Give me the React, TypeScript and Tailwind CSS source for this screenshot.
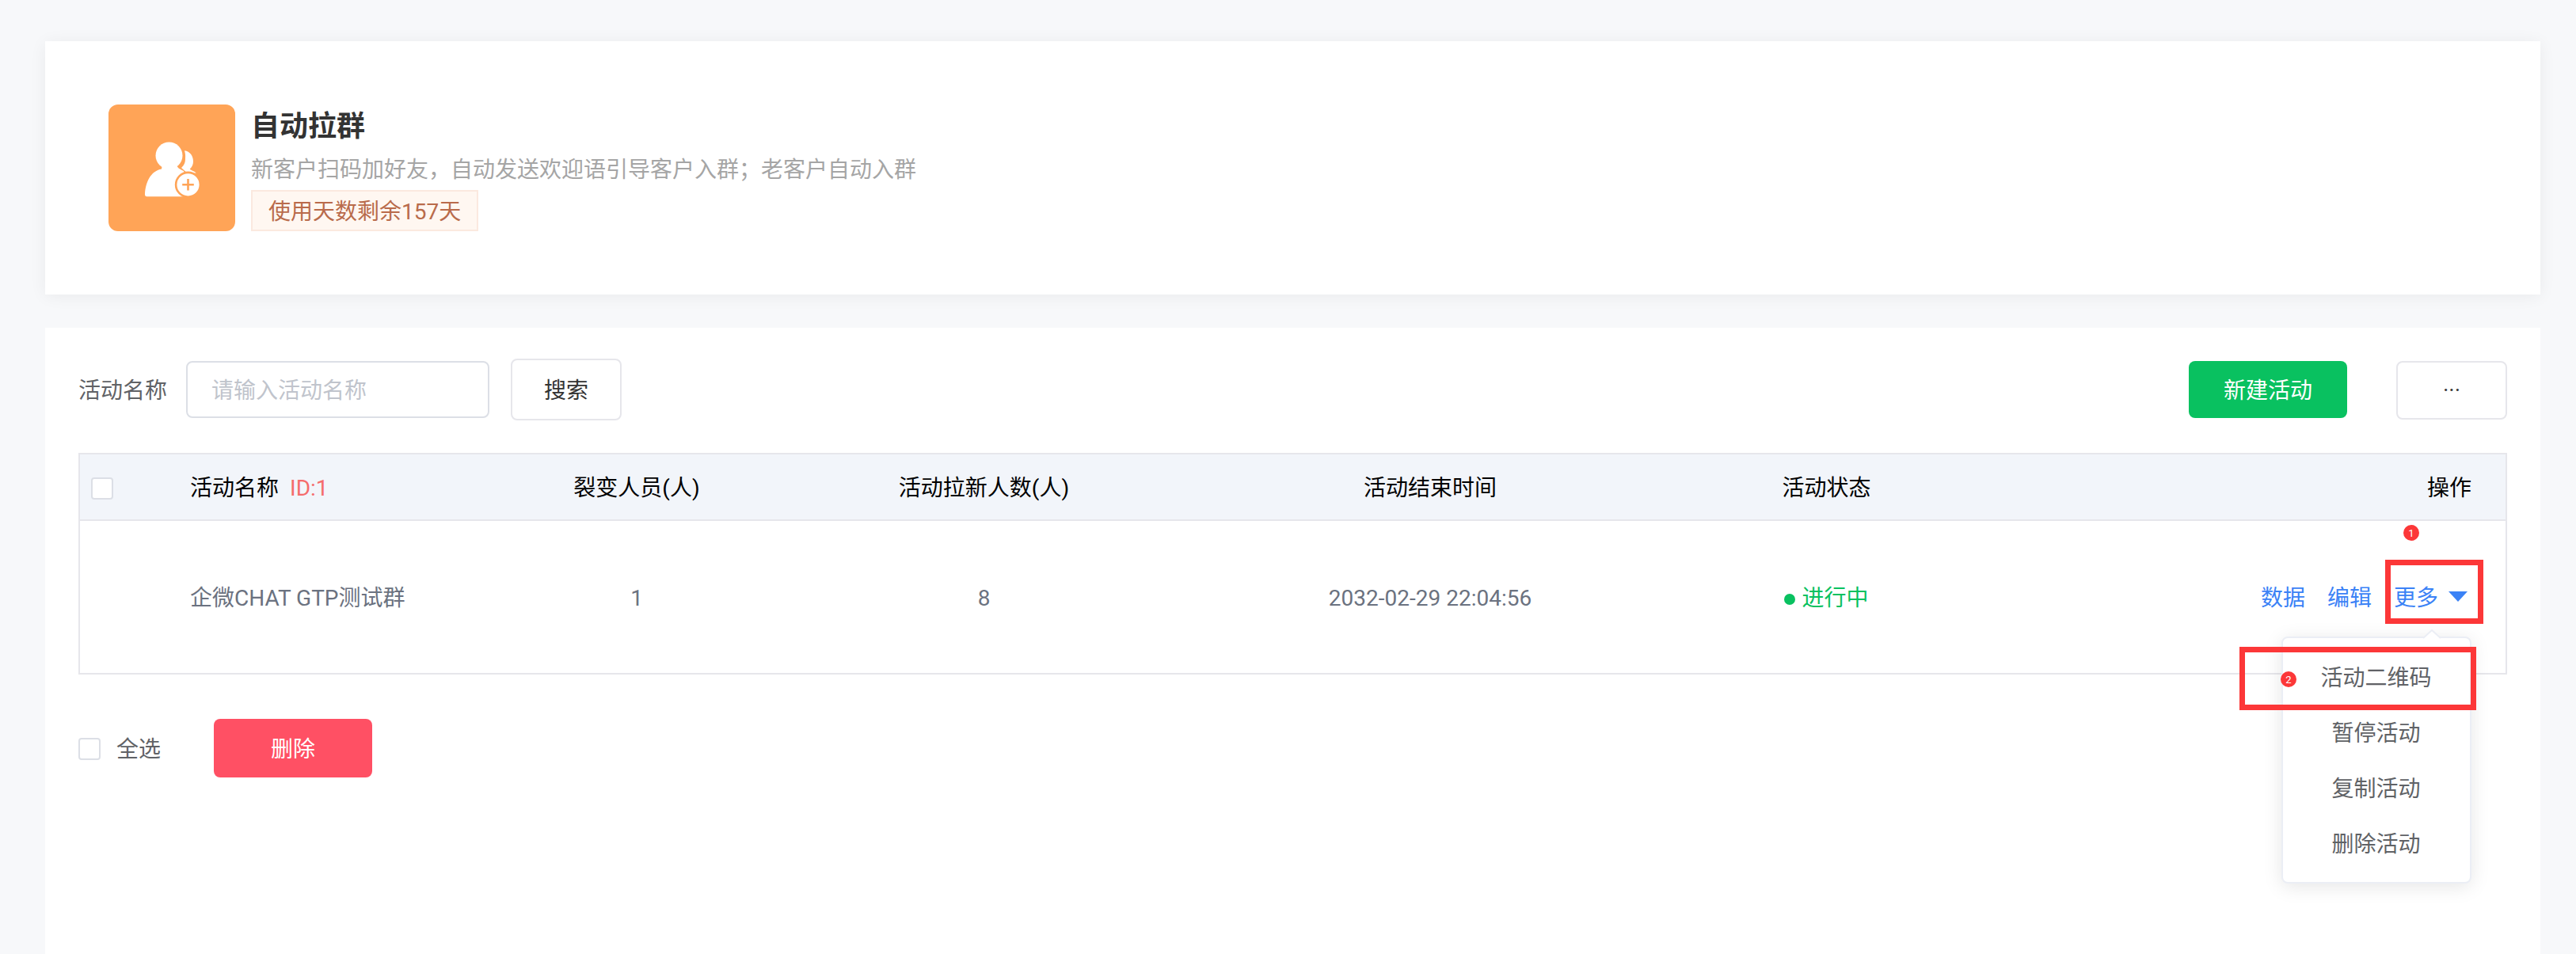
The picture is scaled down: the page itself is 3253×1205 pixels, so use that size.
import clsx from "clsx";

type Activity = {
  name: string;
  members: number;
  newMembers: number;
  endTime: string;
  status: string;
};

const activities: Activity[] = [
  {
    name: "企微CHAT GTP测试群",
    members: 1,
    newMembers: 8,
    endTime: "2032-02-29 22:04:56",
    status: "进行中",
  },
];

const menuItems = ["活动二维码", "暂停活动", "复制活动", "删除活动"];

const columns = "grid grid-cols-[118px_366px_438px_439px_688px_313px_1fr] items-center pt-1";

function Checkbox({ className }: { className?: string }) {
  return <span className={clsx("block size-7 shrink-0 rounded-sm border-2 border-[#dcdfe6] bg-white", className)} />;
}

function GroupIcon() {
  return (
    <svg viewBox="0 0 160 160" className="size-40 shrink-0">
      <rect width="160" height="160" rx="12" fill="#ffa457" />
      <path
        fill="#fff"
        d="M96 58.300c7 1 11 6.500 11 13.700 0 4-1.500 7-4.300 9.500 2 2 5 2 8 5L100 87l-8-7c4-4 5-7 5-12 .3-4 0-6-1-9.700z"
      />
      <circle cx="76.500" cy="64.500" r="17" fill="#fff" />
      <path
        fill="#fff"
        d="M68 76h18c1 4 3 5 9 8l5 17-6 15.300H48.500c-1.700 0-2.500-1-2.500-2.800C46.500 99 53 84 67 81.500z"
      />
      <circle cx="100.500" cy="101.300" r="15.400" fill="#fff" stroke="#ffa457" strokeWidth="2.600" />
      <path d="M100.500 94v14.600M93.200 101.300h14.600" stroke="#ffa457" strokeWidth="2.600" />
    </svg>
  );
}

function Header() {
  return (
    <section className="flex h-80 items-center bg-white px-20 shadow-[0_2px_20px_rgba(0,0,0,0.06)]">
      <GroupIcon />
      <div className="ml-5 flex h-40 flex-col items-start">
        <h1 className="h-[54px] text-4xl leading-[56px] font-bold text-[#333]">自动拉群</h1>
        <p className="h-[54px] leading-[58px] text-[#a5a5a5]">
          新客户扫码加好友，自动发送欢迎语引导客户入群；老客户自动入群
        </p>
        <span className="h-[52px] border-2 border-[#fbe9df] bg-[#fff7f1] px-5 leading-[51px] text-[#b96b4b]">
          使用天数剩余157天
        </span>
      </div>
    </section>
  );
}

function Toolbar() {
  return (
    <div className="flex h-[78px] items-center">
      <label className="pt-[3px] text-[#606266]">活动名称</label>
      <input
        placeholder="请输入活动名称"
        className="ml-6 h-[72px] w-[383px] rounded-lg border-2 border-[#dcdfe6] px-[30px] pt-[3px] placeholder:text-[#c0c4cc]"
      />
      <button className="ml-[27px] h-[78px] w-[140px] rounded-lg border-2 border-[#e6e6eb] pt-[3px] text-[#333]">
        搜索
      </button>
      <button className="ml-auto h-[72px] w-[200px] rounded-lg bg-[#09c160] pt-[3px] text-white">新建活动</button>
      <button className="mt-0.5 ml-[62px] flex h-[74px] w-[140px] items-center justify-center rounded-lg border-2 border-[#e6e6eb] text-[#333]">
        ···
      </button>
    </div>
  );
}

function Badge({ n, className }: { n: number; className: string }) {
  return (
    <span
      className={clsx(
        "absolute flex size-5 items-center justify-center rounded-full bg-[#fc3738] text-[13px] leading-none text-white",
        className
      )}
    >
      {n}
    </span>
  );
}

function MoreMenu() {
  return (
    <div className="absolute top-[146px] right-[43px] h-[312px] w-60 rounded-lg border-2 border-[#ebeef5] bg-white py-3.5 text-center text-[#606266] shadow-[0_4px_24px_rgba(0,0,0,0.1)]">
      <svg viewBox="0 0 22 13" className="absolute -top-[11px] right-[37px] h-[13px] w-[22px]">
        <path d="M0 11 11 1l11 10v2H0z" fill="#fff" />
        <path d="M0 11 11 1l11 10" fill="none" stroke="#ebeef5" strokeWidth="2" />
      </svg>
      {menuItems.map((item) => (
        <div key={item} className="h-[70px] pr-px leading-[73px]">
          {item}
        </div>
      ))}
      <span className="absolute top-[11px] -left-[55px] h-20 w-[299px] border-[7px] border-[#fc3738]" />
      <Badge n={2} className="top-[42px] -left-[3px]" />
    </div>
  );
}

function ActivityTable() {
  return (
    <div className="mt-[41px] border-2 border-[#e6e6eb]">
      <div className={clsx(columns, "h-[84px] border-b-2 border-[#e6e6eb] bg-[#f2f5fa] text-center text-black")}>
        <Checkbox className="ml-3.5" />
        <div className="pl-[21px] text-left">
          活动名称<span className="ml-3.5 text-[#f56c6c]">ID:1</span>
        </div>
        <div>裂变人员(人)</div>
        <div>活动拉新人数(人)</div>
        <div>活动结束时间</div>
        <div>活动状态</div>
        <div className="pr-[43px] text-right">操作</div>
      </div>
      {activities.map((a) => (
        <div key={a.name} className={clsx(columns, "relative h-48 text-center text-[#6b7280]")}>
          <div />
          <div className="pl-[21px] text-left">{a.name}</div>
          <div>{a.members}</div>
          <div>{a.newMembers}</div>
          <div>{a.endTime}</div>
          <div className="flex items-center justify-center gap-2 text-[#09c160]">
            <span className="mt-0.5 size-3.5 rounded-full bg-[#09c160]" />
            {a.status}
          </div>
          <div className="flex items-center justify-end gap-7 pr-[48px] text-[#3b82f6]">
            <a>数据</a>
            <a>编辑</a>
            <a className="flex items-center gap-[13px]">
              更多
              <svg viewBox="0 0 24 13" className="mb-[5px] h-[13px] w-6" fill="currentColor">
                <path d="M0 0h24L12 13z" />
              </svg>
            </a>
          </div>
          <MoreMenu />
          <span className="absolute top-[49px] right-7 h-[81px] w-[124px] border-[7px] border-[#fc3738]" />
          <Badge n={1} className="top-[5px] right-[109px]" />
        </div>
      ))}
    </div>
  );
}

export default function App() {
  return (
    <div className="h-[1205px] overflow-hidden bg-[#f7f8fa] pt-[52px] pr-[45px] pl-[57px] font-[Roboto,'Noto_Sans_CJK_SC',sans-serif] text-[28px] leading-10">
      <Header />
      <main className="mt-[42px] h-[860px] bg-white pt-[39px] pr-[42px] pl-[42px]">
        <Toolbar />
        <ActivityTable />
        <div className="mt-14 flex items-center">
          <Checkbox className="mt-0.5" />
          <span className="ml-5 pt-[3px] text-[#606266]">全选</span>
          <button className="ml-[67px] h-[74px] w-[200px] rounded-lg bg-[#ff5064] pt-[3px] text-white">删除</button>
        </div>
      </main>
    </div>
  );
}
